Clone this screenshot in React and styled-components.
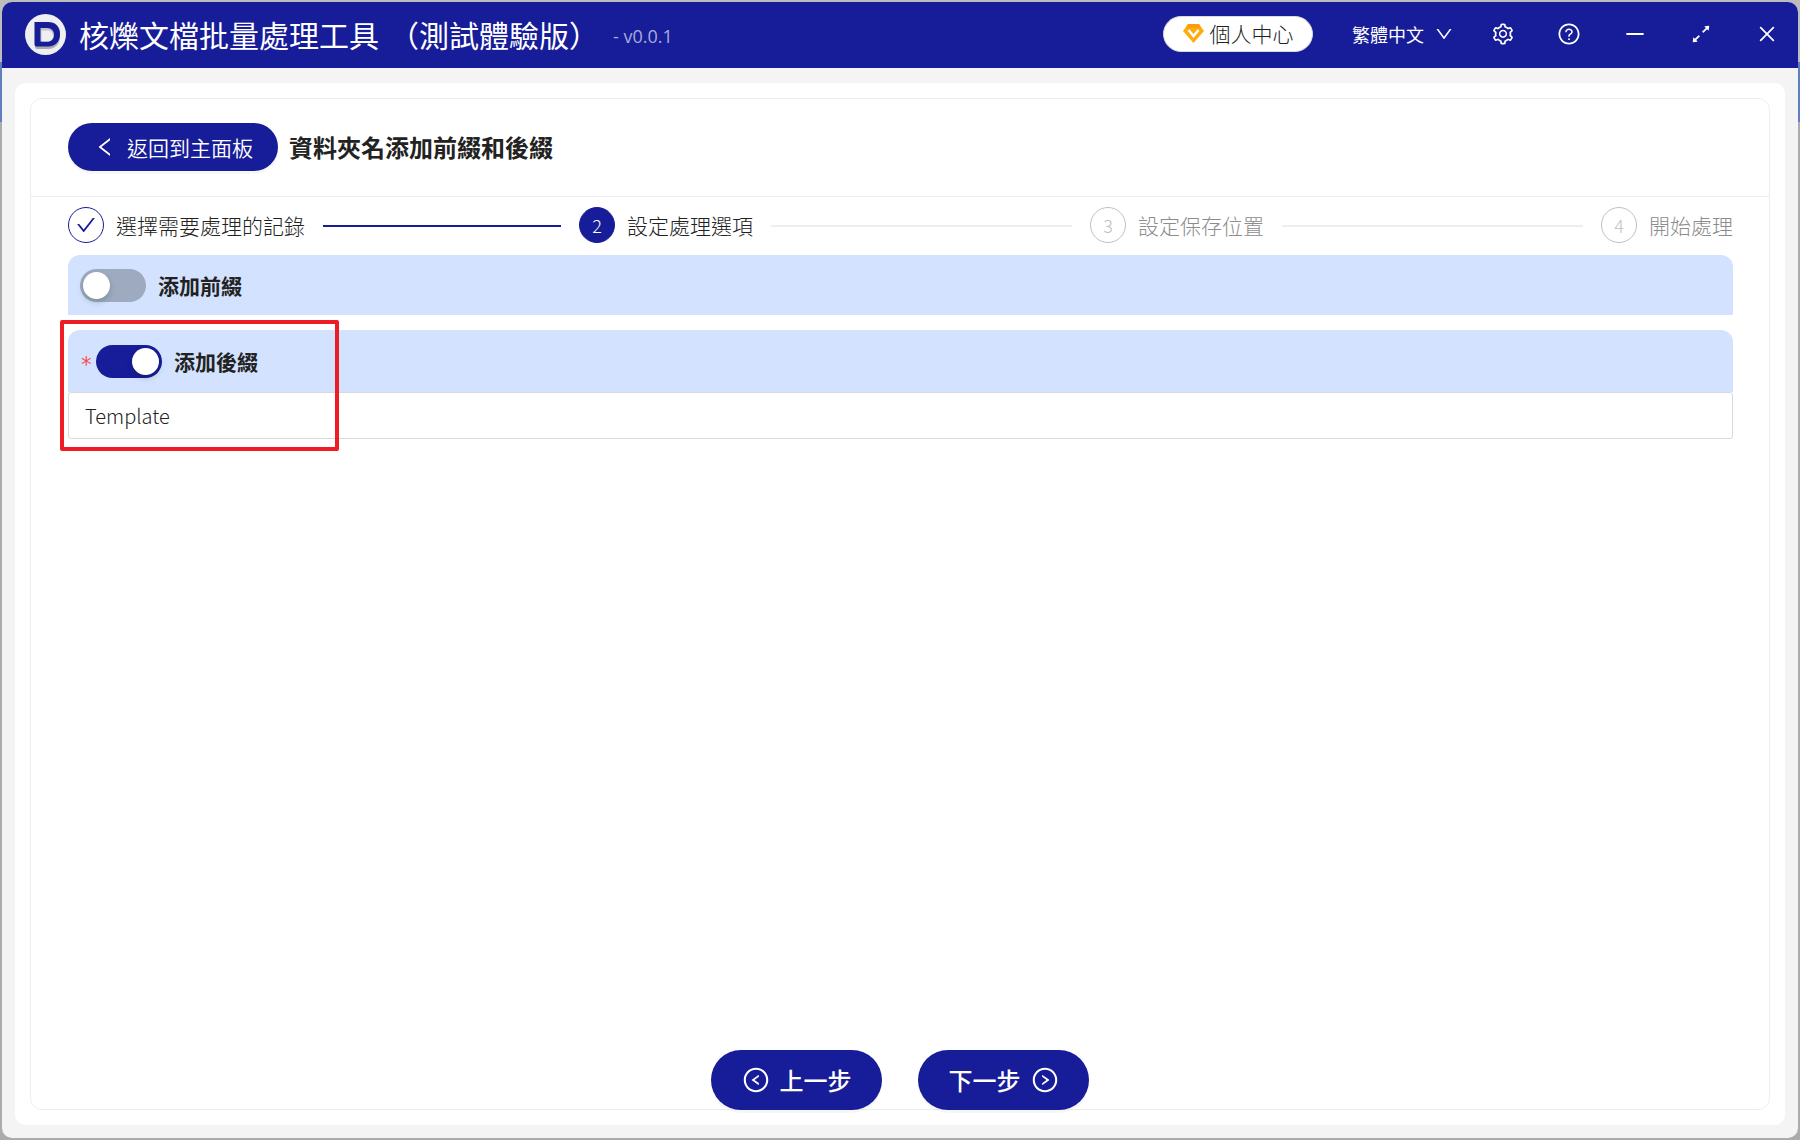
import React, { useState } from "react";
import styled, { createGlobalStyle } from "styled-components";
import {
  AiOutlineSetting,
  AiOutlineQuestionCircle,
  AiOutlineMinus,
  AiOutlineArrowsAlt,
  AiOutlineClose,
  AiOutlineCheck,
  AiOutlineLeft,
  AiOutlineDown,
  AiOutlineLeftCircle,
  AiOutlineRightCircle,
} from "react-icons/ai";

const navy = "#171c98";
const pale = "#d3e2fe";

const GlobalStyle = createGlobalStyle`
  *, *::before, *::after { box-sizing: border-box; }
  body {
    margin: 0;
    color: #222;
    font: 300 21px/32px "Noto Sans CJK TC", "Noto Sans", sans-serif;
    background: #ababab linear-gradient(#bdbdbd 0 62px, #5f7fc0 62px 122px, #ababab 122px) no-repeat;
  }
  button, input, select { font: inherit; color: inherit; }
  button { cursor: pointer; }
  svg { flex: none; }
`;

const Desktop = styled.div`
  display: flex;
  min-height: 100vh;
  padding: 2px;
`;

const Window = styled.div`
  flex: 1;
  min-width: 0;
  display: flex;
  flex-direction: column;
  overflow: hidden;
  border-radius: 10px;
  background: #f4f4f4;
`;

const TitleBar = styled.header`
  display: flex;
  align-items: center;
  height: 66px;
  padding: 0 19px 2px 23px;
  color: #fff;
  background: ${navy};
`;

const AppName = styled.h1`
  display: flex;
  gap: 10px;
  margin: 0 0 0 13px;
  font-size: 30px;
  line-height: 40px;
  font-weight: 400;
  white-space: nowrap;
`;

const Version = styled.span`
  margin: 4px auto 0 14px;
  font-family: "Open Sans", "Noto Sans", sans-serif;
  font-size: 18px;
  line-height: 24px;
  font-weight: 400;
  color: #a9abd8;
`;

const AccountButton = styled.button`
  display: flex;
  align-items: center;
  justify-content: center;
  gap: 6px;
  width: 150px;
  height: 36px;
  padding: 0 0 2px;
  border: 1px solid #d9d9d9;
  border-radius: 18px;
  color: #222;
  background: #fff;
`;

const LanguagePicker = styled.label`
  display: grid;
  align-items: center;
  width: 102px;
  margin: 0 37px 0 39px;

  > * { grid-area: 1 / 1; }
  > svg { justify-self: end; pointer-events: none; }
`;

const LanguageSelect = styled.select`
  appearance: none;
  width: 100%;
  padding: 0;
  border: 0;
  font-size: 18px;
  line-height: 24px;
  font-weight: 400;
  background: transparent;
`;

const WindowActions = styled.nav`
  display: flex;
  gap: 42px;
`;

const IconButton = styled.button`
  display: grid;
  place-items: center;
  width: 24px;
  height: 24px;
  padding: 0;
  border: 0;
  background: none;
`;

const Panel = styled.main`
  flex: 1;
  display: flex;
  margin: 15px 13px 13px;
  padding: 15px;
  border-radius: 10px;
  background: #fff;
`;

const Card = styled.section`
  flex: 1;
  min-width: 0;
  display: flex;
  flex-direction: column;
  border: 1px solid #ededed;
  border-radius: 12px;
`;

const CardHeader = styled.div`
  display: flex;
  align-items: center;
  gap: 11px;
  min-height: 98px;
  padding: 0 36px 1px 37px;
  border-bottom: 1px solid #ededed;
`;

const PillButton = styled.button`
  display: flex;
  align-items: center;
  justify-content: center;
  gap: 10px;
  width: ${(p) => (p.$large ? 171 : 210)}px;
  height: ${(p) => (p.$large ? 60 : 48)}px;
  padding: 0;
  border: 0;
  border-radius: 30px;
  font-size: ${(p) => (p.$large ? 24 : 21)}px;
  font-weight: ${(p) => (p.$large ? 500 : 350)};
  color: #fff;
  background: ${navy};
  box-shadow: 0 3px 0 rgba(0, 0, 0, 0.03);
`;

const PageTitle = styled.h2`
  margin: 0;
  font-size: 24px;
  line-height: 32px;
  font-weight: 700;
`;

const Steps = styled.ol`
  display: flex;
  margin: 10px 36px 12px 37px;
  padding: 0;
  list-style: none;
`;

const Step = styled.li`
  display: flex;
  align-items: center;
  flex: 1;
  height: 36px;
  white-space: nowrap;
  color: ${(p) => (p.$state === "wait" ? "#8c8c8c" : "#222")};

  &::after {
    content: "";
    flex: 1;
    height: 2px;
    margin: 2px 18px 0;
    background: ${(p) => (p.$state === "done" ? navy : "#eeeeee")};
  }

  &:last-child { flex: none; }
  &:last-child::after { display: none; }
`;

const stepColors = {
  done: { ink: navy, line: navy, fill: "#fff" },
  current: { ink: "#fff", line: navy, fill: navy },
  wait: { ink: "#bfbfbf", line: "#bfbfbf", fill: "#fff" },
};

const StepMark = styled.span`
  display: grid;
  place-items: center;
  width: 36px;
  height: 36px;
  margin-right: 12px;
  border: 1px solid ${(p) => stepColors[p.$state].line};
  border-radius: 50%;
  font-size: 18px;
  color: ${(p) => stepColors[p.$state].ink};
  background: ${(p) => stepColors[p.$state].fill};
`;

const Options = styled.form`
  flex: 1;
  display: flex;
  flex-direction: column;
  gap: 15px;
  padding: 0 36px 0 37px;
`;

const Option = styled.div`
  position: relative;
`;

const OptionHeader = styled.div`
  display: flex;
  align-items: center;
  height: ${(p) => (p.$open ? 62 : 60)}px;
  padding: 0 12px;
  border-radius: 12px 12px 0 0;
  background: ${pale};
`;

const Required = styled.span`
  width: 16px;
  padding-top: 8px;
  font-family: "DejaVu Sans Mono", monospace;
  font-weight: 400;
  line-height: 24px;
  color: #ff4d4f;
`;

const OptionLabel = styled.label`
  display: flex;
  align-items: center;
  gap: 12px;
  font-weight: 700;
`;

const Switch = styled.input`
  appearance: none;
  display: flex;
  align-items: center;
  justify-content: ${(p) => (p.checked ? "flex-end" : "flex-start")};
  width: 66px;
  height: 33px;
  margin: 0;
  padding: 3px;
  border-radius: 17px;
  background: ${(p) => (p.checked ? navy : "#9eaabf")};

  &::before {
    content: "";
    width: 27px;
    height: 27px;
    border-radius: 50%;
    background: #fff;
    box-shadow: 0 3px 6px rgba(0, 35, 11, 0.2);
  }
`;

const TextField = styled.input`
  display: block;
  width: 100%;
  height: 47px;
  padding: 0 16px;
  border: 1px solid #d9d9d9;
  border-radius: 3px;
  outline: 0;
  font-size: 20px;
  background: #fff;
`;

const Highlight = styled.div`
  position: absolute;
  inset: -10px auto -12px -8px;
  width: 279px;
  border: 4px solid #ee1c25;
  border-radius: 2px;
  pointer-events: none;
`;

const Footer = styled.footer`
  display: flex;
  justify-content: center;
  gap: 36px;
  margin-bottom: -1px;
`;

function Logo() {
  return (
    <svg width="41" height="41" viewBox="0 0 41 41" aria-hidden="true">
      <circle cx="20.5" cy="20.5" r="20.5" fill="#eeeff1" />
      <path
        d="M10 12h13c7.500 0 12 3 12 10s-4.500 13-12 13H12q-2 0-2-2z"
        fill="#a9aaae"
      />
      <path
        d="M9.500 8h13.500c7.500 0 12 4.500 12 12s-4.500 12.500-12 12.500H11.500q-2 0-2-2z"
        fill={navy}
      />
      <path d="M15.500 14v13.500h6.500c4.500 0 7-2.500 7-6.500s-2.500-7-7-7z" fill="#c3c4ca" />
      <path d="M16.500 16.500v11h5.500c4 0 6-2 6-5.500s-2-5.500-6-5.500z" fill="#eeeff1" />
    </svg>
  );
}

function Diamond() {
  return (
    <svg width="21" height="20" viewBox="0 0 21 20" aria-hidden="true">
      <path d="M5 1h11l5 7-10.500 12L0 8z" fill="#ffab0d" />
      <path d="M5 1h11l1.500 4h-14z" fill="#fc9c0c" />
      <path d="M5.500 7l5 6 5-6" fill="none" stroke="#fff" strokeWidth="2.500" />
    </svg>
  );
}

const steps = [
  { title: "選擇需要處理的記錄", state: "done" },
  { title: "設定處理選項", state: "current" },
  { title: "設定保存位置", state: "wait" },
  { title: "開始處理", state: "wait" },
];

const windowActions = [
  { label: "設定", Icon: AiOutlineSetting, size: 24 },
  { label: "說明", Icon: AiOutlineQuestionCircle, size: 24 },
  { label: "最小化", Icon: AiOutlineMinus, size: 24 },
  { label: "最大化", Icon: AiOutlineArrowsAlt, size: 24 },
  { label: "關閉", Icon: AiOutlineClose, size: 22 },
];

export default function App() {
  const [prefixOn, setPrefixOn] = useState(false);
  const [suffixOn, setSuffixOn] = useState(true);
  const [suffix, setSuffix] = useState("Template");

  return (
    <Desktop>
      <GlobalStyle />
      <Window>
        <TitleBar>
          <Logo />
          <AppName>
            <span>核爍文檔批量處理工具</span>
            <span>（測試體驗版）</span>
          </AppName>
          <Version>- v0.0.1</Version>
          <AccountButton type="button">
            <Diamond />
            個人中心
          </AccountButton>
          <LanguagePicker>
            <LanguageSelect aria-label="語言">
              <option>繁體中文</option>
            </LanguageSelect>
            <AiOutlineDown size={20} />
          </LanguagePicker>
          <WindowActions>
            {windowActions.map(({ label, Icon, size }) => (
              <IconButton key={label} type="button" aria-label={label}>
                <Icon size={size} />
              </IconButton>
            ))}
          </WindowActions>
        </TitleBar>
        <Panel>
          <Card>
            <CardHeader>
              <PillButton type="button">
                <AiOutlineLeft size={24} />
                返回到主面板
              </PillButton>
              <PageTitle>資料夾名添加前綴和後綴</PageTitle>
            </CardHeader>
            <Steps>
              {steps.map(({ title, state }, i) => (
                <Step key={title} $state={state}>
                  <StepMark $state={state}>
                    {state === "done" ? <AiOutlineCheck size={22} /> : i + 1}
                  </StepMark>
                  {title}
                </Step>
              ))}
            </Steps>
            <Options>
              <Option>
                <OptionHeader>
                  <OptionLabel>
                    <Switch
                      type="checkbox"
                      role="switch"
                      checked={prefixOn}
                      onChange={(e) => setPrefixOn(e.target.checked)}
                    />
                    添加前綴
                  </OptionLabel>
                </OptionHeader>
              </Option>
              <Option>
                <OptionHeader $open>
                  <Required>*</Required>
                  <OptionLabel>
                    <Switch
                      type="checkbox"
                      role="switch"
                      checked={suffixOn}
                      onChange={(e) => setSuffixOn(e.target.checked)}
                    />
                    添加後綴
                  </OptionLabel>
                </OptionHeader>
                <TextField
                  type="text"
                  aria-label="添加後綴"
                  value={suffix}
                  onChange={(e) => setSuffix(e.target.value)}
                />
                <Highlight />
              </Option>
            </Options>
            <Footer>
              <PillButton type="button" $large>
                <AiOutlineLeftCircle size={28} />
                上一步
              </PillButton>
              <PillButton type="button" $large>
                下一步
                <AiOutlineRightCircle size={28} />
              </PillButton>
            </Footer>
          </Card>
        </Panel>
      </Window>
    </Desktop>
  );
}
